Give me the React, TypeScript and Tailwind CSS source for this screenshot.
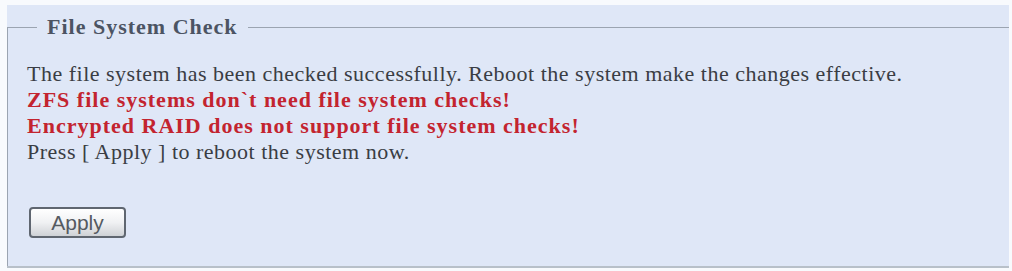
export default function App() {
  return (
    <div className="h-[271px] w-[1012px] overflow-hidden bg-[#f8fafd] pt-[5px] pl-[7px] pr-[3px] [font-family:'Liberation_Serif','Times_New_Roman',serif]">
      <div className="h-[263px] border-b-2 border-[#b8c0c9] bg-[#dfe7f7] pt-[10px]">
        <fieldset className="h-[251px] border-l border-t border-[#9ba4b1]">
          <legend className="ml-[29px] px-[10px] text-[22px] font-bold leading-[24px] tracking-[1px] text-[#4c5463]">
            File System Check
          </legend>
          <div className="pl-[19px] pt-[22px] text-[22px] leading-[26px] text-[#3a3d44]">
            <p className="tracking-[0.5px]">
              The file system has been checked successfully. Reboot the system make the changes effective.
            </p>
            <p className="font-bold tracking-[1px] text-[#c3242f]">ZFS file systems don`t need file system checks!</p>
            <p className="font-bold tracking-[1px] text-[#c3242f]">Encrypted RAID does not support file system checks!</p>
            <p className="tracking-[0.5px]">Press [ Apply ] to reboot the system now.</p>
            <button className="mt-[42px] ml-[2px] h-[31px] w-[97px] rounded-[4px] border-2 border-[#5f6670] bg-gradient-to-b from-[#ffffff] via-[#f0f1f3] to-[#cfd2d6] text-[21px] leading-none text-[#555a61] [font-family:'Liberation_Sans',Arial,sans-serif]">
              Apply
            </button>
          </div>
        </fieldset>
      </div>
    </div>
  );
}
